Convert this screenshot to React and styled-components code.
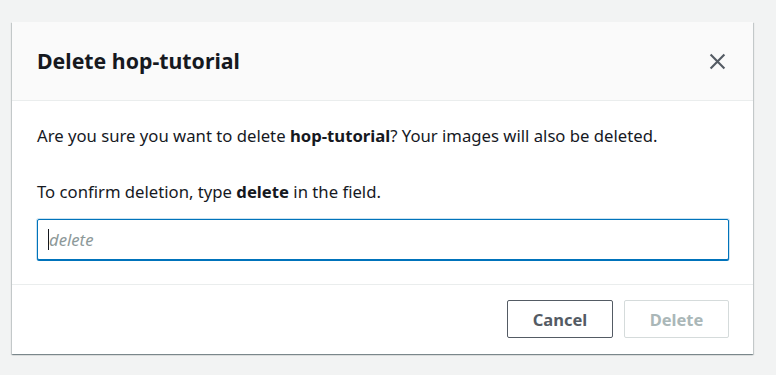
import styled, { createGlobalStyle } from "styled-components"

const Global = createGlobalStyle`
    html, body {
        margin: 0;
        padding: 0;
        background: #f2f3f3;
        font-family: "Noto Sans", "Open Sans", sans-serif;
        color: #16191f;
    }
`

const Page = styled.div`
    padding: 22px 22px 0 12px;
    width: 776px;
    height: 375px;
    box-sizing: border-box;
`

const Dialog = styled.div`
    width: 741px;
    background: #fff;
    box-shadow: 0 1px 1px 0 rgba(0, 28, 36, 0.3), 1px 1px 1px 0 rgba(0, 28, 36, 0.15), -1px 1px 1px 0 rgba(0, 28, 36, 0.15);
`

const Header = styled.div`
    display: flex;
    align-items: center;
    justify-content: space-between;
    height: 78px;
    padding: 0 26px 0 25px;
    background: #fafafa;
    border-bottom: 1px solid #eaeded;
`

const Title = styled.h2`
    margin: 0;
    font-size: 21.3px;
    font-weight: 700;
    line-height: 26px;
`

const Close = styled.button`
    border: none;
    background: none;
    padding: 0;
    width: 20px;
    height: 20px;
    display: flex;
    align-items: center;
    justify-content: center;
    cursor: pointer;
`

const Body = styled.div`
    padding: 23px 24px 24px 25px;
    border-bottom: 1px solid #eaeded;
`

const Text = styled.p`
    margin: 0 0 ${p => p.gap || 0}px;
    font-size: 16.7px;
    line-height: 24px;
`

const Field = styled.div`
    position: relative;
`

const Input = styled.input`
    display: block;
    width: 100%;
    box-sizing: border-box;
    height: 41px;
    padding: 4px 11px;
    font-family: inherit;
    font-size: 16.7px;
    border: 1px solid #0073bb;
    border-radius: 2px;
    box-shadow: 0 1px 0 0 #0073bb, 0 0 0 1px rgba(0, 115, 187, 0.2);
    outline: none;
    &::placeholder {
        color: #8d9999;
        font-style: italic;
    }
`

const Caret = styled.span`
    position: absolute;
    left: 11px;
    top: 10px;
    width: 1px;
    height: 21px;
    background: #16191f;
`

const Footer = styled.div`
    display: flex;
    justify-content: flex-end;
    gap: 11px;
    padding: 15px 24px 16px;
`

const Botao = styled.button`
    width: ${p => p.w}px;
    height: 38px;
    background: #fff;
    border: 1px solid ${p => (p.disabled ? "#d5dbdb" : "#545b64")};
    border-radius: 2px;
    color: ${p => (p.disabled ? "#aab7b8" : "#545b64")};
    font-family: inherit;
    font-size: 16.5px;
    font-weight: 700;
    cursor: ${p => (p.disabled ? "default" : "pointer")};
`

export default function App() {
    return (
        <>
            <Global />
            <Page>
                <Dialog>
                    <Header>
                        <Title>Delete hop-tutorial</Title>
                        <Close aria-label="Close">
                            <svg width="17" height="17" viewBox="0 0 16 16">
                                <path d="M1.5 1.5l13 13M14.5 1.5l-13 13" stroke="#545b64" strokeWidth="2" fill="none" />
                            </svg>
                        </Close>
                    </Header>
                    <Body>
                        <Text gap={32}>
                            Are you sure you want to delete <b>hop-tutorial</b>? Your images will also be deleted.
                        </Text>
                        <Text gap={15}>
                            To confirm deletion, type <b>delete</b> in the field.
                        </Text>
                        <Field>
                            <Input placeholder="delete" />
                            <Caret />
                        </Field>
                    </Body>
                    <Footer>
                        <Botao w={106}>Cancel</Botao>
                        <Botao w={105} disabled>Delete</Botao>
                    </Footer>
                </Dialog>
            </Page>
        </>
    )
}
